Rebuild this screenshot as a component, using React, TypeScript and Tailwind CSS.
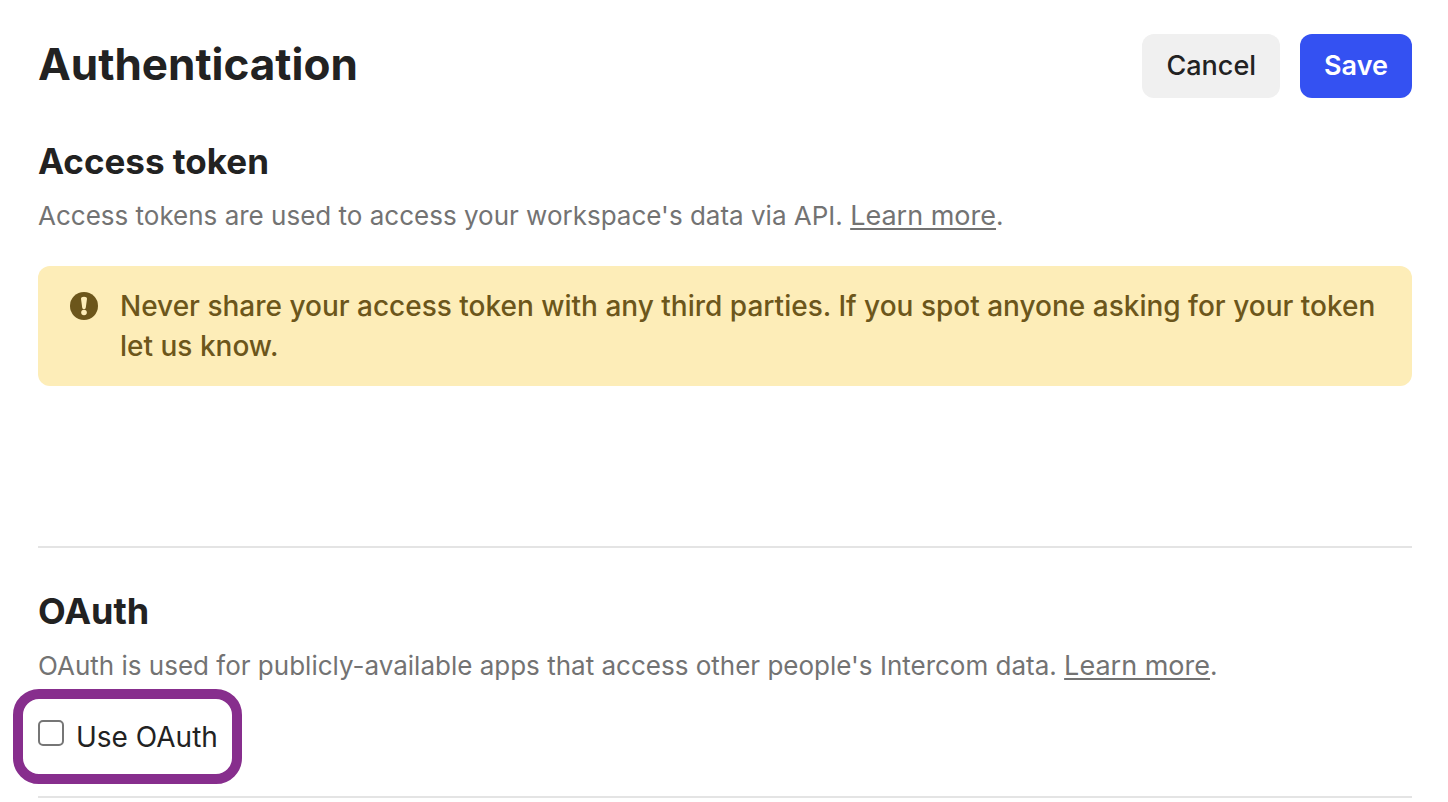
import React from "react";

function LearnMore() {
  return (
    <a href="#" className="text-[27px] underline decoration-2 underline-offset-3">
      Learn more
    </a>
  );
}

export default function App() {
  return (
    <main className="min-h-screen bg-white pr-9 pl-[38px] pt-[34px] font-['Inter',sans-serif] text-[#222222]">
      <header className="flex items-start justify-between">
        <h1 className="text-[44px] leading-[60px] font-bold">Authentication</h1>
        <div className="flex gap-5">
          <button type="button" className="h-16 rounded-xl bg-[#f0f0f0] px-6 text-[27px] font-medium">
            Cancel
          </button>
          <button type="button" className="h-16 rounded-xl bg-[#3451f2] px-6 text-[27px] font-semibold text-white">
            Save
          </button>
        </div>
      </header>

      <section className="mt-10 border-b-2 border-[#e4e4e4] pb-40">
        <h2 className="text-[35px] leading-[46px] font-bold">Access token</h2>
        <p className="mt-3 text-[26px] leading-[40px] text-[#737373]">
          Access tokens are used to access your workspace's data via API. <LearnMore />.
        </p>
        <div className="mt-[30px] flex gap-[22px] rounded-xl bg-[#fdedb8] px-8 py-5 text-[#6c561b]">
          <svg viewBox="0 0 28 28" className="mt-[6px] size-7 shrink-0" aria-hidden="true">
            <circle cx="14" cy="14" r="14" fill="currentColor" />
            <path d="M11 6.8a3 2 0 0 1 6 0l-1.2 8.8a1.8 1.6 0 0 1-3.6 0z" fill="#fdedb8" />
            <circle cx="14" cy="20.5" r="2.8" fill="#fdedb8" />
          </svg>
          <p className="text-[28px] leading-10 font-medium">
            Never share your access token with any third parties. If you spot anyone asking for your token let us know.
          </p>
        </div>
      </section>

      <section className="mt-10 border-b-2 border-[#e4e4e4] pb-3">
        <h2 className="text-[36px] leading-[46px] font-bold">OAuth</h2>
        <p className="mt-3 text-[26px] leading-[40px] text-[#737373]">
          OAuth is used for publicly-available apps that access other people's Intercom data. <LearnMore />.
        </p>
        <label className="mt-[3px] -ml-[25px] flex h-[95px] w-fit items-center gap-3 rounded-[26px] border-[10px] border-[#872e8d] pr-[14px] pl-[15px] text-[28px]">
          <input type="checkbox" className="mb-2 size-[26px] appearance-none rounded-[5px] border-2 border-[#767676] bg-white checked:bg-[#3451f2]" />
          Use OAuth
        </label>
      </section>
    </main>
  );
}
